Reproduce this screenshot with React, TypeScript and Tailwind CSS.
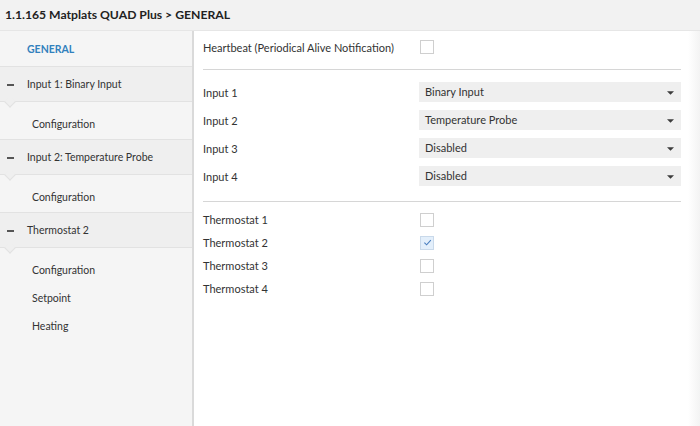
import React from 'react';

const font = { fontFamily: 'Lato, "Open Sans", sans-serif' };

const Checkbox: React.FC<{ checked?: boolean }> = ({ checked }) => (
  <div
    className={`w-[14px] h-[14px] border flex items-center justify-center ${
      checked ? 'bg-[#e3effb] border-[#c9d9ea]' : 'bg-white border-[#cfcfcf]'
    }`}
  >
    {checked && (
      <svg viewBox="0 0 10 10" className="w-[9px] h-[9px]" fill="none" stroke="#4a7fc0" strokeWidth={1.2}>
        <path d="M1.5 5.2 L4 7.6 L8.7 2.4" />
      </svg>
    )}
  </div>
);

const Select: React.FC<{ value: string }> = ({ value }) => (
  <div className="flex-1 h-[20px] bg-[#efefef] flex items-center justify-between pl-[6px] pr-[7px] pt-[1px] text-[#333]">
    <span>{value}</span>
    <svg viewBox="0 0 8 4" className="w-[7px] h-[4px]" fill="#3c3c3c">
      <path d="M0 0 H8 L4 4 Z" />
    </svg>
  </div>
);

const GroupHeader: React.FC<{ label: string }> = ({ label }) => (
  <div className="relative h-[36px] bg-[#efefef] border-y border-[#e2e2e2] flex items-center pt-[2px]">
    <div className="ml-[7px] mr-[13px] w-[7px] h-[1.5px] bg-[#555]" />
    <span>{label}</span>
    <div className="absolute left-[6px] bottom-[-5px] w-[8px] h-[8px] bg-[#efefef] border-r border-b border-[#e2e2e2] rotate-45" />
  </div>
);

const SubItems: React.FC<{ items: string[] }> = ({ items }) => (
  <div className="pt-[8px] pb-[1px]">
    {items.map((it) => (
      <div key={it} className="h-[28px] flex items-center pl-[32px] pt-[2px]">
        {it}
      </div>
    ))}
  </div>
);

export default function App() {
  const inputs = [
    ['Input 1', 'Binary Input'],
    ['Input 2', 'Temperature Probe'],
    ['Input 3', 'Disabled'],
    ['Input 4', 'Disabled'],
  ];
  const thermostats = ['Thermostat 1', 'Thermostat 2', 'Thermostat 3', 'Thermostat 4'];

  return (
    <div className="w-[700px] h-[426px] flex flex-col bg-white overflow-hidden text-[11px] text-[#333]" style={font}>
      <div className="h-[31px] shrink-0 bg-[#f2f2f2] border-b border-[#e6e6e6] flex items-center px-[5px] pt-[1px] text-[12.2px] font-bold text-[#222]">
        1.1.165 Matplats QUAD Plus &gt; GENERAL
      </div>
      <div className="flex-1 flex min-h-0">
        <div className="w-[194px] shrink-0 bg-[#f5f5f5] border-r-2 border-[#dadada] text-[10.5px]">
          <div className="h-[35px] flex items-center pl-[27px] pt-[2px] text-[#3281bd] font-bold">GENERAL</div>
          <GroupHeader label="Input 1: Binary Input" />
          <SubItems items={['Configuration']} />
          <GroupHeader label="Input 2: Temperature Probe" />
          <SubItems items={['Configuration']} />
          <GroupHeader label="Thermostat 2" />
          <SubItems items={['Configuration', 'Setpoint', 'Heating']} />
        </div>
        <div className="relative flex-1 pl-[9px] pr-[19px]">
          <div className="h-[32px] flex items-center">
            <span className="w-[217px] pt-[2px]">Heartbeat (Periodical Alive Notification)</span>
            <Checkbox />
          </div>
          <div className="mt-[6px] border-t border-[#d6d6d6]" />
          <div className="pt-[8px]">
            {inputs.map(([label, value]) => (
              <div key={label} className="h-[28px] flex items-center">
                <span className="w-[216px] pt-[2px]">{label}</span>
                <Select value={value} />
              </div>
            ))}
          </div>
          <div className="mt-[11px] border-t border-[#d6d6d6]" />
          <div className="pt-[6px]">
            {thermostats.map((t) => (
              <div key={t} className="h-[23px] flex items-center">
                <span className="w-[217px] pt-[2px]">{t}</span>
                <Checkbox checked={t === 'Thermostat 2'} />
              </div>
            ))}
          </div>
          <div className="absolute top-0 right-0 bottom-0 w-[12px] bg-gradient-to-r from-white to-[#f3f3f3]" />
        </div>
      </div>
    </div>
  );
}
